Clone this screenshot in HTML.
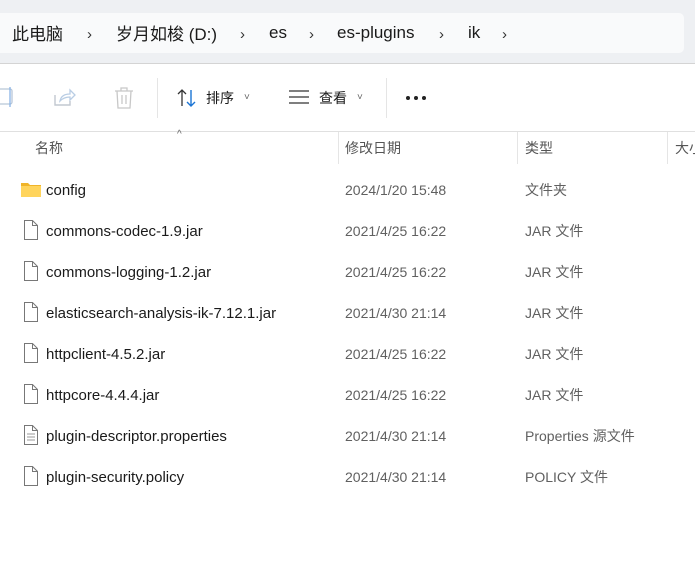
<!DOCTYPE html>
<html><head><meta charset="utf-8"><style>
*{margin:0;padding:0;box-sizing:border-box}
body{width:695px;height:563px;overflow:hidden;background:#fff;font-family:"Liberation Sans","Noto Sans CJK SC",sans-serif;position:relative;color:#1a1a1a}
.top{position:absolute;left:0;top:0;width:695px;height:64px;background:#eef0f3;border-bottom:1px solid #d4d4d4}
.addr{position:absolute;left:0;top:13px;width:684px;height:40px;background:#f9fafb;border-radius:0 5px 5px 0}
.t{position:absolute;white-space:nowrap}
.crumb{font-size:17px;top:22px;color:#1a1a1a}
.sep{font-size:15px;top:26px;color:#333}
.tb{position:absolute;left:0;top:65px;width:695px;height:67px;border-bottom:1px solid #e0e0e0}
.vl{position:absolute;top:78px;width:1px;height:40px;background:#e5e5e5}
.hd{font-size:14px;top:138px;color:#555}
.hl{position:absolute;top:132px;width:1px;height:32px;background:#e5e5e5}
.r{font-size:15px;color:#1a1a1a}
.d{font-size:14px;color:#606060}
</style></head><body>
<div class="top"><div class="addr"></div></div>
<div class="t crumb" style="left:12px;top:20px">此电脑</div>
<div class="t sep" style="left:87px">›</div>
<div class="t crumb" style="left:116px;top:20px">岁月如梭 (D:)</div>
<div class="t sep" style="left:240px">›</div>
<div class="t crumb" style="left:269px;top:23px">es</div>
<div class="t sep" style="left:309px">›</div>
<div class="t crumb" style="left:337px;top:23px">es-plugins</div>
<div class="t sep" style="left:439px">›</div>
<div class="t crumb" style="left:468px;top:23px">ik</div>
<div class="t sep" style="left:502px">›</div>
<div class="tb"></div>
<svg class="t" style="left:0;top:86px" width="16" height="22"><rect x="-6" y="3" width="18" height="15" rx="2" fill="none" stroke="#b8c6d8" stroke-width="1.3"/><path d="M10 1v20" stroke="#8ab4e6" stroke-width="1.3"/></svg>
<svg class="t" style="left:52px;top:87px" width="24" height="22"><path d="M3 8v10h15v-4" fill="none" stroke="#c2c8d0" stroke-width="1.4"/><path d="M8 14c1-5 5-7 10-7v-4l5 5-5 5v-3c-4 0-7 1-10 4z" fill="none" stroke="#b9cde4" stroke-width="1.3"/></svg>
<svg class="t" style="left:113px;top:86px" width="22" height="24"><path d="M2 5h18M8 5V2h6v3M4 5l1 17h12l1-17M9 9v9M13 9v9" fill="none" stroke="#c8c8c8" stroke-width="1.3"/></svg>
<div class="vl" style="left:157px"></div>
<svg class="t" style="left:176px;top:88px" width="22" height="20"><path d="M6 18V2M2 6l4-4 4 4" fill="none" stroke="#333" stroke-width="1.3"/><path d="M15 2v16M11 14l4 4 4-4" fill="none" stroke="#1b74d4" stroke-width="1.4"/></svg>
<div class="t" style="left:206px;top:88px;font-size:14px">排序</div>
<div class="t" style="left:244px;top:92px;font-size:10px;color:#666">˅</div>
<svg class="t" style="left:289px;top:90px" width="20" height="14"><path d="M0 1h20M0 7h20M0 13h20" stroke="#333" stroke-width="1.3"/></svg>
<div class="t" style="left:319px;top:88px;font-size:14px">查看</div>
<div class="t" style="left:357px;top:92px;font-size:10px;color:#666">˅</div>
<div class="vl" style="left:386px"></div>
<svg class="t" style="left:405px;top:95px" width="24" height="6"><circle cx="3" cy="3" r="2" fill="#222"/><circle cx="11" cy="3" r="2" fill="#222"/><circle cx="19" cy="3" r="2" fill="#222"/></svg>
<div class="t" style="left:177px;top:129px;font-size:10px;color:#666">^</div>
<div class="t hd" style="left:35px">名称</div>
<div class="hl" style="left:338px"></div>
<div class="t hd" style="left:345px">修改日期</div>
<div class="hl" style="left:517px"></div>
<div class="t hd" style="left:525px">类型</div>
<div class="hl" style="left:667px"></div>
<div class="t hd" style="left:675px">大小</div>

<svg class="t" style="left:21px;top:181px" width="20" height="16"><path d="M0 2h7l2 2h11v12H0z" fill="#f0b429"/><path d="M0 5h20v11H0z" fill="#ffd45c"/></svg>
<div class="t r" style="left:46px;top:182px">config</div>
<div class="t d" style="left:345px;top:182px">2024/1/20 15:48</div>
<div class="t d" style="left:525px;top:180px">文件夹</div>

<div id="rows"></div>
<script>
var rows=[["commons-codec-1.9.jar","2021/4/25 16:22","JAR 文件"],["commons-logging-1.2.jar","2021/4/25 16:22","JAR 文件"],["elasticsearch-analysis-ik-7.12.1.jar","2021/4/30 21:14","JAR 文件"],["httpclient-4.5.2.jar","2021/4/25 16:22","JAR 文件"],["httpcore-4.4.4.jar","2021/4/25 16:22","JAR 文件"],["plugin-descriptor.properties","2021/4/30 21:14","Properties 源文件"],["plugin-security.policy","2021/4/30 21:14","POLICY 文件"]];
var h="";rows.forEach(function(r,i){var y=223+41*i;
h+='<svg class="t" style="left:23px;top:'+(y-3)+'px" width="16" height="20"><path d="M1.5 .5h8l5 5v14h-13z" fill="#fff" stroke="#777"/><path d="M9.5 .5v5h5" fill="none" stroke="#777"/>'+(i==5?'<path d="M4 9h8M4 12h8M4 15h8" stroke="#999"/>':'')+'</svg>';
h+='<div class="t r" style="left:46px;top:'+y+'px">'+r[0]+'</div><div class="t d" style="left:345px;top:'+y+'px">'+r[1]+'</div><div class="t d" style="left:525px;top:'+(y-2)+'px">'+r[2]+'</div>';});
document.getElementById("rows").innerHTML=h;
</script>
</body></html>
